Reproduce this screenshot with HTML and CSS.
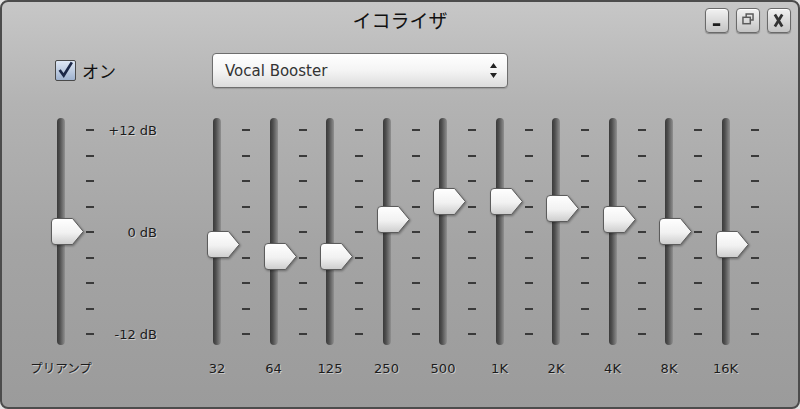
FILE: index.html
```html
<!DOCTYPE html>
<html lang="ja">
<head>
  <meta charset="UTF-8">
  <meta name="viewport" content="width=device-width, initial-scale=1.0">
  <title>イコライザ</title>
  <link rel="stylesheet" href="styles.css">
</head>
<body>
  <svg class="defs" width="0" height="0">
    <defs>
      <linearGradient id="thumbFill" x1="0" y1="0" x2="0" y2="1">
        <stop offset="0" stop-color="#ffffff"/>
        <stop offset="0.55" stop-color="#f1f1f1"/>
        <stop offset="1" stop-color="#cdcdcd"/>
      </linearGradient>
      <symbol id="thumb" viewBox="0 0 33 27">
        <path d="M4 .5H21.5L32.3 13.5 21.5 26.5H4Q.5 26.5 .5 23V4Q.5 .5 4 .5Z" fill="url(#thumbFill)" stroke="#5c5c5c"/>
      </symbol>
    </defs>
  </svg>

  <div class="window">
    <div class="titlebar">
      <h1 class="title">イコライザ</h1>
      <div class="win-buttons">
        <button class="win-btn" title="最小化">
          <svg viewBox="0 0 24 25"><rect x="7.5" y="15.5" width="8" height="3" fill="#1e1e1e"/></svg>
        </button>
        <button class="win-btn" title="元に戻す">
          <svg viewBox="0 0 24 25" fill="none" stroke="#5a5a5a" stroke-width="1.6">
            <path d="M10 9V5.5h7.5v6.5h-3.5"/>
            <rect x="6.5" y="9" width="8" height="7"/>
          </svg>
        </button>
        <button class="win-btn" title="閉じる">
          <svg viewBox="0 0 24 25" stroke="#333" stroke-width="3">
            <path d="M7.5 6l8 13M15.5 6l-8 13"/>
          </svg>
        </button>
      </div>
    </div>

    <div class="controls">
      <label class="power">
        <span class="checkbox">
          <svg viewBox="0 0 21 21">
            <path d="M4 10l4.5 6L17.5 1.5" fill="none" stroke="#1c2848" stroke-width="3"/>
          </svg>
        </span>
        オン
      </label>
      <div class="preset">
        <span>Vocal Booster</span>
        <svg class="arrows" viewBox="0 0 7 15"><path d="M0 5L3.5 0 7 5zM0 10h7l-3.5 5z" fill="#222"/></svg>
      </div>
    </div>

    <div class="bands">
      <div class="band preamp">
        <div class="fader">
          <div class="track"><svg class="thumb" style="top:100px"><use href="#thumb"/></svg></div>
          <div class="ticks"><i></i><i></i><i></i><i></i><i></i><i></i><i></i><i></i><i></i></div>
          <div class="db-scale">
            <span>+12 dB</span>
            <span>0 dB</span>
            <span>-12 dB</span>
          </div>
        </div>
        <div class="band-label">プリアンプ</div>
      </div>

      <div class="band">
        <div class="fader">
          <div class="track"><svg class="thumb" style="top:113px"><use href="#thumb"/></svg></div>
          <div class="ticks"><i></i><i></i><i></i><i></i><i></i><i></i><i></i><i></i><i></i></div>
        </div>
        <div class="band-label">32</div>
      </div>
      <div class="band">
        <div class="fader">
          <div class="track"><svg class="thumb" style="top:125px"><use href="#thumb"/></svg></div>
          <div class="ticks"><i></i><i></i><i></i><i></i><i></i><i></i><i></i><i></i><i></i></div>
        </div>
        <div class="band-label">64</div>
      </div>
      <div class="band">
        <div class="fader">
          <div class="track"><svg class="thumb" style="top:125px"><use href="#thumb"/></svg></div>
          <div class="ticks"><i></i><i></i><i></i><i></i><i></i><i></i><i></i><i></i><i></i></div>
        </div>
        <div class="band-label">125</div>
      </div>
      <div class="band">
        <div class="fader">
          <div class="track"><svg class="thumb" style="top:88px"><use href="#thumb"/></svg></div>
          <div class="ticks"><i></i><i></i><i></i><i></i><i></i><i></i><i></i><i></i><i></i></div>
        </div>
        <div class="band-label">250</div>
      </div>
      <div class="band">
        <div class="fader">
          <div class="track"><svg class="thumb" style="top:70px"><use href="#thumb"/></svg></div>
          <div class="ticks"><i></i><i></i><i></i><i></i><i></i><i></i><i></i><i></i><i></i></div>
        </div>
        <div class="band-label">500</div>
      </div>
      <div class="band">
        <div class="fader">
          <div class="track"><svg class="thumb" style="top:70px"><use href="#thumb"/></svg></div>
          <div class="ticks"><i></i><i></i><i></i><i></i><i></i><i></i><i></i><i></i><i></i></div>
        </div>
        <div class="band-label">1K</div>
      </div>
      <div class="band">
        <div class="fader">
          <div class="track"><svg class="thumb" style="top:77px"><use href="#thumb"/></svg></div>
          <div class="ticks"><i></i><i></i><i></i><i></i><i></i><i></i><i></i><i></i><i></i></div>
        </div>
        <div class="band-label">2K</div>
      </div>
      <div class="band">
        <div class="fader">
          <div class="track"><svg class="thumb" style="top:88px"><use href="#thumb"/></svg></div>
          <div class="ticks"><i></i><i></i><i></i><i></i><i></i><i></i><i></i><i></i><i></i></div>
        </div>
        <div class="band-label">4K</div>
      </div>
      <div class="band">
        <div class="fader">
          <div class="track"><svg class="thumb" style="top:100px"><use href="#thumb"/></svg></div>
          <div class="ticks"><i></i><i></i><i></i><i></i><i></i><i></i><i></i><i></i><i></i></div>
        </div>
        <div class="band-label">8K</div>
      </div>
      <div class="band">
        <div class="fader">
          <div class="track"><svg class="thumb" style="top:113px"><use href="#thumb"/></svg></div>
          <div class="ticks"><i></i><i></i><i></i><i></i><i></i><i></i><i></i><i></i><i></i></div>
        </div>
        <div class="band-label">16K</div>
      </div>
    </div>
  </div>
</body>
</html>
```

FILE: styles.css
```css
body {
  margin: 0;
  background: #e4e4e4;
  font-family: "DejaVu Sans", "Noto Sans CJK JP", sans-serif;
  color: #1c1c1c;
}
.defs {
  display: block;
  width: 0;
  height: 0;
}
.window {
  width: 800px;
  height: 409px;
  box-sizing: border-box;
  border: 2px solid #4c4c4c;
  border-radius: 8px;
  background: linear-gradient(#c7c7c7 0%, #b3b3b3 25%, #a4a4a4 60%, #9b9b9b 100%);
  overflow: hidden;
}

/* шапка окна */
.titlebar {
  display: grid;
  grid-template-columns: 1fr auto 1fr;
  align-items: start;
  height: 40px;
  box-sizing: border-box;
  padding: 6px 7px 0;
}
.title {
  grid-column: 2;
  margin: 0;
  font-family: "Noto Sans CJK JP", sans-serif;
  font-size: 19px;
  font-weight: normal;
  line-height: 24px;
  color: #111;
}
.win-buttons {
  grid-column: 3;
  justify-self: end;
  display: flex;
  gap: 7px;
}
.win-btn {
  width: 24px;
  height: 25px;
  padding: 0;
  border: 1px solid #6a6a6a;
  border-radius: 4px;
  background: linear-gradient(#f2f2f2, #c4c4c4);
  box-shadow: 0 1px 1px rgba(0, 0, 0, 0.3), inset 0 1px 0 #fff;
}
.win-btn svg {
  display: block;
  width: 22px;
  height: 23px;
}

/* переключатель и пресет */
.controls {
  display: flex;
  align-items: center;
  height: 35px;
  margin-top: 11px;
  padding-left: 53px;
}
.power {
  display: flex;
  align-items: center;
  gap: 6px;
  width: 157px;
  font-family: "Noto Sans CJK JP", sans-serif;
  font-size: 17px;
  color: #111;
}
.checkbox {
  width: 21px;
  height: 21px;
  box-sizing: border-box;
  border: 1px solid #4a4a4a;
  border-radius: 2px;
  background: linear-gradient(#dfe8f5, #9fb2cf);
}
.checkbox svg {
  display: block;
  width: 19px;
  height: 19px;
  overflow: visible;
}
.preset {
  display: flex;
  align-items: center;
  justify-content: space-between;
  width: 296px;
  height: 35px;
  box-sizing: border-box;
  padding: 0 10px 0 12px;
  border: 1px solid #6e6e6e;
  border-radius: 4px;
  background: linear-gradient(#ffffff 0%, #f4f4f4 50%, #dcdcdc 100%);
  box-shadow: 0 1px 1px rgba(0, 0, 0, 0.15);
  font-size: 15px;
  color: #333;
}
.arrows {
  width: 7px;
  height: 15px;
}

/* полосы эквалайзера */
.bands {
  display: flex;
  gap: 19.5px;
  margin-top: 30px;
  padding-left: 55px;
}
.band {
  display: flex;
  flex-direction: column;
  align-items: flex-start;
}
.preamp {
  margin-right: 36.5px;
}
.fader {
  display: flex;
  height: 227px;
}
.track {
  position: relative;
  width: 8px;
  border-radius: 4px;
  background: linear-gradient(to right, #3a3a3a 0%, #4e4e4e 35%, #767676 75%, #909090 100%);
}
.thumb {
  position: absolute;
  left: -6px;
  width: 33px;
  height: 27px;
  filter: drop-shadow(1px 1px 1px rgba(0, 0, 0, 0.35));
}
.ticks {
  display: flex;
  flex-direction: column;
  justify-content: space-between;
  margin-left: 21px;
  padding: 11px 0 10px;
}
.ticks i {
  display: block;
  width: 8px;
  height: 2px;
  background: #3a3a3a;
}
.db-scale {
  display: flex;
  flex-direction: column;
  justify-content: space-between;
  width: 63px;
  padding: 11px 0 10px;
}
.db-scale span {
  display: flex;
  align-items: center;
  justify-content: flex-end;
  height: 2px;
  white-space: nowrap;
  font-size: 13px;
  text-shadow: 1px 1px 0 rgba(255, 255, 255, 0.45);
}
.band-label {
  display: flex;
  justify-content: center;
  width: 8px;
  margin-top: 16px;
  white-space: nowrap;
  font-size: 13px;
  line-height: 16px;
  text-shadow: 1px 1px 0 rgba(255, 255, 255, 0.45);
}
.preamp .band-label {
  font-size: 12.5px;
}
```
